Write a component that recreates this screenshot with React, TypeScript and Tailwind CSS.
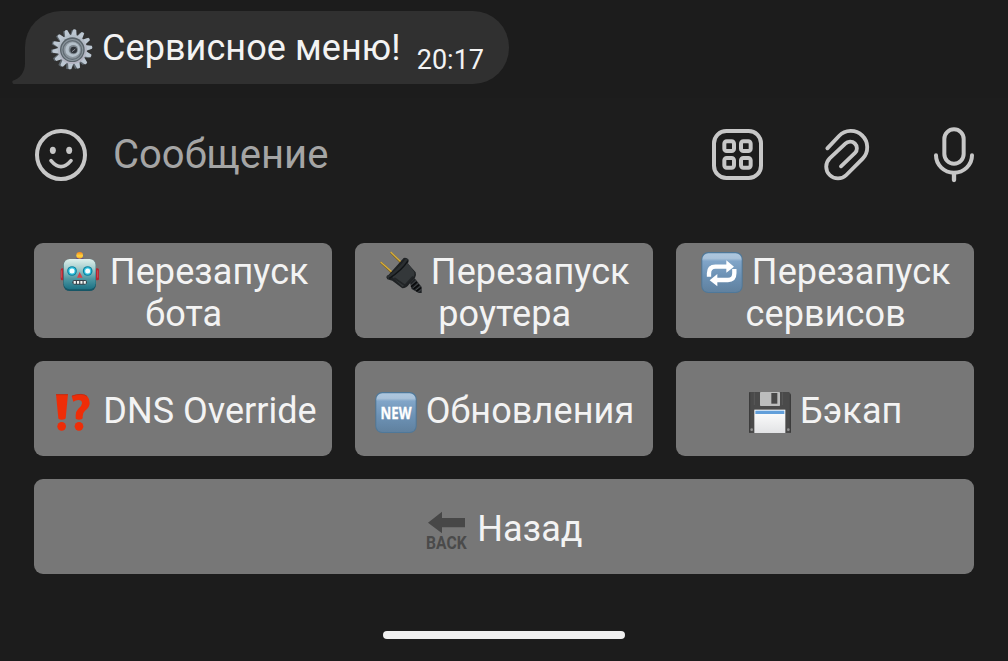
import type { ReactNode } from 'react';

const EMOJI = 'inline-block h-[42px] w-[42px] -mb-[10px] overflow-visible align-baseline';

function Gear() {
  const teeth = Array.from({ length: 14 }, (_, i) => (i * 360) / 14 + 8);
  return (
    <svg className={EMOJI} viewBox="153 84 126 126">
      <defs>
        <linearGradient id="gearBody" x1="0" y1="0" x2="0.3" y2="1">
          <stop offset="0" stopColor="#b3c0c9" />
          <stop offset="1" stopColor="#b4b4c2" />
        </linearGradient>
      </defs>
      <g fill="#5d666d" transform="translate(-4 1)">
        {teeth.map((a) => (
          <path key={a} d="M208 110 L211 89 H221 L224 110Z" transform={`rotate(${a} 216 148)`} />
        ))}
      </g>
      <g fill="#bcc7d2">
        {teeth.map((a) => (
          <path key={a} d="M207 110 L211.500 89 Q216 86 220.500 89 L225 110Z" transform={`rotate(${a} 217 148)`} />
        ))}
      </g>
      <circle cx="217" cy="148" r="44" fill="url(#gearBody)" />
      <circle cx="217" cy="149" r="37" fill="#59636a" />
      <circle cx="217" cy="150" r="33" fill="#8b959d" />
      <circle cx="217" cy="150" r="28" fill="none" stroke="#636d75" strokeWidth="4" />
      <circle cx="218" cy="149" r="22" fill="#b4c0ca" />
      <circle cx="220" cy="149" r="14" fill="#7c858d" />
      <circle cx="221" cy="150" r="10" fill="#30343a" />
      <path d="M216 155 L226 147" stroke="#8a8d94" strokeWidth="3" />
    </svg>
  );
}

function Robot() {
  return (
    <svg className={EMOJI} viewBox="103 51 126 126">
      <defs>
        <linearGradient id="botFace" x1="0" y1="0" x2="0" y2="1">
          <stop offset="0" stopColor="#dff0ec" />
          <stop offset="0.3" stopColor="#a9cfce" />
          <stop offset="0.65" stopColor="#4f98a3" />
          <stop offset="1" stopColor="#1b7184" />
        </linearGradient>
        <linearGradient id="botBulb" x1="0" y1="0" x2="0" y2="1">
          <stop offset="0" stopColor="#f6871c" />
          <stop offset="0.6" stopColor="#ffd640" />
          <stop offset="1" stopColor="#f0a020" />
        </linearGradient>
      </defs>
      <path d="M152 78 Q152 67 165 67 Q179 67 179 78Z" fill="#674d86" />
      <ellipse cx="165" cy="61" rx="10" ry="10" fill="url(#botBulb)" />
      <rect x="108" y="100" width="12" height="36" rx="5" fill="#b32631" />
      <rect x="211" y="100" width="12" height="36" rx="5" fill="#b32631" />
      <path d="M111 106 V128 M219 106 V128" stroke="#d8636a" strokeWidth="2" />
      <rect x="116" y="73" width="98" height="95" rx="19" fill="#175666" />
      <rect x="117" y="72" width="96" height="91" rx="18" fill="url(#botFace)" />
      <circle cx="142" cy="108" r="14.500" fill="#087f9d" />
      <circle cx="189" cy="108" r="14.500" fill="#087f9d" />
      <circle cx="142" cy="108" r="11" fill="#37c7e4" />
      <circle cx="189" cy="108" r="11" fill="#37c7e4" />
      <circle cx="142" cy="108" r="7.500" fill="#f4ffff" />
      <circle cx="189" cy="108" r="7.500" fill="#f4ffff" />
      <path d="M165 111 L174 128 H157Z" fill="#d5444b" />
      <rect x="143" y="135" width="44" height="14" rx="7" fill="#39434b" />
      <path d="M147 142 H184" stroke="#f5f7f5" strokeWidth="8" strokeDasharray="6.500 3.500" />
    </svg>
  );
}

function Plug() {
  return (
    <svg className={EMOJI} viewBox="106 51 126 126">
      <path d="M108 82 L142 113 M138 52 L170 84" stroke="#7b6220" strokeWidth="6" />
      <path d="M108 81 L142 111 M138 51 L170 82" stroke="#d7ad3c" strokeWidth="4" />
      <path d="M196 143 L210 130 L231 156 V174 H222 L201 162Z" fill="#202326" />
      <path d="M199 151 L215 136 M206 158 L222 144 M213 165 L228 153 M221 171 L231 162" stroke="#4f5356" strokeWidth="2.500" />
      <path d="M199 155 L216 141 M207 162 L223 149 M215 169 L229 158" stroke="#08090a" strokeWidth="4" />
      <path d="M125 127 Q125 121 132 119 L177 69 Q186 67 192 74 L190 86 L213 112 Q216 121 211 129 L194 147 Q185 160 173 160 L143 137 L128 133Z" fill="#1f2224" />
      <path d="M140 124 L185 79 L209 111 Q211 121 206 126 L174 156Z" fill="#34383a" />
      <path d="M127 124 Q158 105 185 69 L191 76 Q172 110 130 132Z" fill="#2b2f31" />
      <path d="M149 129 L181 151 L205 125" fill="none" stroke="#222527" strokeWidth="5" />
      <path d="M134 130 Q173 105 190 77" fill="none" stroke="#111416" strokeWidth="4" />
    </svg>
  );
}

function BlueTile({ id, x, y }: { id: string; x: number; y: number }) {
  return (
    <>
      <defs>
        <linearGradient id={id} x1="0" y1="0" x2="0" y2="1">
          <stop offset="0" stopColor="#adc7df" />
          <stop offset="0.13" stopColor="#a9c2da" />
          <stop offset="0.2" stopColor="#81a5c8" />
          <stop offset="0.6" stopColor="#6c91b4" />
          <stop offset="1" stopColor="#60819f" />
        </linearGradient>
      </defs>
      <rect x={x} y={y} width="124" height="123" rx="21" fill="#4f7899" />
      <rect x={x + 3} y={y + 4} width="118" height="116" rx="18" fill={`url(#${id})`} />
    </>
  );
}

function Repeat() {
  return (
    <svg className={EMOJI} viewBox="109 51 126 126">
      <BlueTile id="repeatTile" x={110} y={51} />
      <path
        d="M133 125 V115 Q133 95 152 95 H188 M209 102 V115 Q209 135 190 135 H155"
        fill="none"
        stroke="#fff"
        strokeWidth="13"
      />
      <path d="M185 76 L208 95 L185 113Z M158 117 L135 136 L158 154Z" fill="#fff" />
    </svg>
  );
}

function Interrobang() {
  return (
    <svg className={EMOJI} viewBox="82 108 126 126">
      <g fill="#ee2d08">
        <path d="M94 118 H130 L123 190 Q122 194 111 194 Q101 194 101 190Z" />
        <circle cx="111" cy="214" r="13" />
        <circle cx="163" cy="214" r="13" />
        <path d="M141 123 Q155 117 169 117 Q195 119 195 144 Q195 158 181 167 Q174 173 174 184 V190 Q173 194 163 194 Q153 194 153 190 V181 Q153 169 161 161 Q172 153 172 145 Q172 135 161 135 Q153 136 146 140Z" />
      </g>
      <path d="M94 119 H130 M142 123 Q155 118 169 118 Q181 119 187 124" fill="none" stroke="#b92c16" strokeWidth="2.500" />
    </svg>
  );
}

function NewBadge() {
  return (
    <svg className={EMOJI} viewBox="88 108 126 126">
      <BlueTile id="newTile" x={89} y={111} />
      <text
        x="151"
        y="191"
        textAnchor="middle"
        textLength="93"
        lengthAdjust="spacingAndGlyphs"
        fill="#fff"
        stroke="#fff"
        strokeWidth="1"
        fontFamily="Noto Sans"
        fontWeight="700"
        fontSize="50"
      >
        NEW
      </text>
    </svg>
  );
}

function Floppy() {
  return (
    <svg className={EMOJI} viewBox="252 108 126 126">
      <defs>
        <linearGradient id="diskLabel" x1="0" y1="0" x2="0" y2="1">
          <stop offset="0" stopColor="#ffffff" />
          <stop offset="1" stopColor="#e2e3e5" />
        </linearGradient>
      </defs>
      <path d="M253 111 H372 L377 116 V234 H253Z" fill="#4a4a4a" />
      <path d="M254 112 V233 M376 118 V233" stroke="#373737" strokeWidth="3" />
      <path d="M268 112 V150 M352 112 V150" stroke="#5a5a5a" strokeWidth="3" />
      <rect x="285" y="111" width="60" height="42" rx="2" fill="#bcbdbd" />
      <rect x="319" y="114" width="18" height="32" fill="#484848" />
      <path d="M268 164 H361 V234 H268Z" fill="url(#diskLabel)" />
      <path d="M271 167 H358 V177 H271Z" fill="#629fda" />
      <circle cx="260" cy="224" r="4" fill="#929292" />
      <circle cx="370" cy="224" r="4" fill="#929292" />
    </svg>
  );
}

function BackArrow() {
  return (
    <svg className={EMOJI} viewBox="79 101 126 126">
      <path d="M85 142 L127 109 V128 H196 V156 H127 V174Z" fill="#474747" />
      <text
        x="79"
        y="220"
        textLength="122"
        lengthAdjust="spacingAndGlyphs"
        fill="#4a4a4a"
        fontFamily="Roboto"
        fontWeight="700"
        fontSize="55"
      >
        BACK
      </text>
    </svg>
  );
}

const ICON = 'h-14 w-14 shrink-0 overflow-visible fill-none stroke-[#c7c7c7]';

function Smiley() {
  return (
    <svg className={ICON} viewBox="99 51 168 168" strokeWidth="12" strokeLinecap="round">
      <circle cx="183" cy="135" r="72" />
      <ellipse cx="158.500" cy="121" rx="9" ry="11" fill="#c7c7c7" stroke="none" />
      <ellipse cx="207.500" cy="121" rx="9" ry="11" fill="#c7c7c7" stroke="none" />
      <path d="M153 152 Q183 188 213 152" strokeWidth="11" />
    </svg>
  );
}

function Commands() {
  return (
    <svg className={ICON} viewBox="60 51 168 168" strokeWidth="12">
      <rect x="72" y="63" width="141" height="141" rx="37" />
      <rect x="103" y="94" width="29" height="29" rx="7" />
      <rect x="153" y="94" width="29" height="29" rx="7" />
      <rect x="103" y="144" width="29" height="29" rx="7" />
      <rect x="153" y="144" width="29" height="29" rx="7" />
    </svg>
  );
}

function Clip() {
  return (
    <svg className={ICON} viewBox="393 51 168 168" strokeWidth="11.500" strokeLinecap="round">
      <path d="M412 115 L447 78 A48.500 48.500 0 0 1 518 146 L469 195 A35 35 0 0 1 419 145 L466 101 A20 20 0 0 1 495 129 L453 169" />
    </svg>
  );
}

function Mic() {
  return (
    <svg className={ICON} viewBox="708 51 168 168" strokeWidth="12" strokeLinecap="round">
      <rect x="763" y="58" width="58" height="103" rx="29" />
      <path d="M738 136 A54 52 0 0 0 846 136" />
      <path d="M792 190 V210" strokeWidth="13" />
    </svg>
  );
}

type KeyProps = {
  icon: ReactNode;
  children: string;
  second?: string;
  className?: string;
};

function Key({ icon, children, second, className = 'pl-[1.5px] tracking-[0.1px]' }: KeyProps) {
  return (
    <button
      className={`flex h-[95px] flex-col items-center justify-center rounded-[9px] bg-[#777777] pt-[5px] text-[36px] leading-[42px] whitespace-nowrap text-[#f3f3f3] ${className}`}
    >
      <span>
        {icon} {children}
      </span>
      {second && <span>{second}</span>}
    </button>
  );
}

export default function App() {
  return (
    <div className="flex h-[661px] w-[1008px] flex-col overflow-hidden bg-[#1c1c1c] font-['Roboto',sans-serif] text-[#f3f3f3]">
      <div className="flex h-[98px] items-start pt-[11px] pl-3">
        <svg className="mt-[44px] -mr-px h-[29px] w-[14px] shrink-0" viewBox="36 165 42 87">
          <path d="M75 165 V190 C75 217 59 237 38 242 Q34 252 46 252 H78 V165Z" fill="#303030" />
        </svg>
        <div className="flex h-[73px] w-[484px] rounded-[36px] rounded-bl-none bg-[#303030] pt-4 pl-[26px]">
          <span className="text-[36px] leading-[42px] tracking-[0.07px] whitespace-nowrap">
            <Gear /> Сервисное меню!
          </span>
          <span className="mt-[17px] ml-auto pr-[25px] text-[27px] leading-8">20:17</span>
        </div>
      </div>

      <div className="flex h-[112px] items-center bg-[#1d1d1d] pt-[2px] pr-[26px] pl-[33px]">
        <Smiley />
        <span className="ml-6 grow text-[40px] leading-[44px] text-[#a5a5a5]">Сообщение</span>
        <Commands />
        <div className="ml-[55px] flex gap-[49px]">
          <Clip />
          <Mic />
        </div>
      </div>

      <div className="mt-[33px] grid grid-cols-3 gap-[23px] px-[34px]">
        <Key icon={<Robot />} second="бота">Перезапуск</Key>
        <Key icon={<Plug />} second="роутера">Перезапуск</Key>
        <Key icon={<Repeat />} second="сервисов">Перезапуск</Key>
        <Key icon={<Interrobang />} className="pl-[3px]">DNS Override</Key>
        <Key icon={<NewBadge />} className="pl-px tracking-[0.12px]">Обновления</Key>
        <Key icon={<Floppy />}>Бэкап</Key>
        <Key icon={<BackArrow />} className="col-span-3 pl-px tracking-[0.1px]">Назад</Key>
      </div>

      <div className="mt-[57px] h-2 w-[242px] self-center rounded-full bg-[#f0f0f0]" />
    </div>
  );
}
